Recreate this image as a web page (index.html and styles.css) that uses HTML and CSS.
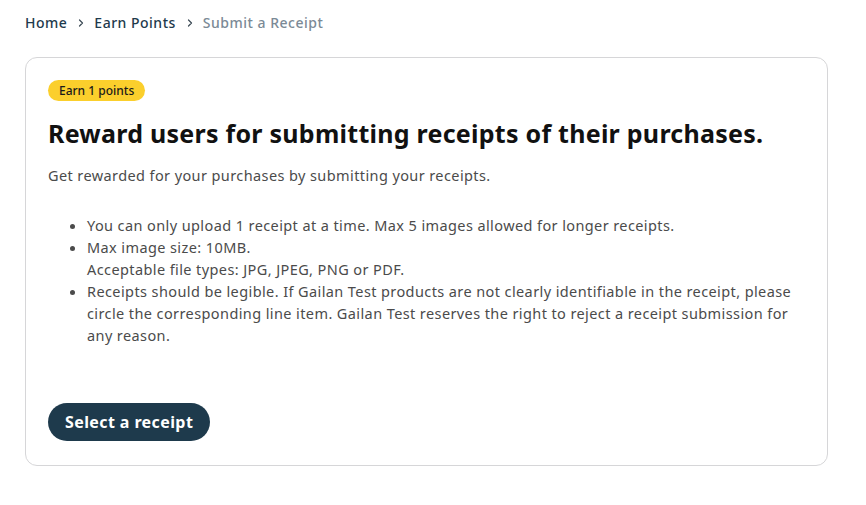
FILE: index.html
```html
<!DOCTYPE html>
<html>
<head>
<meta charset="utf-8">
<link rel="stylesheet" href="styles.css">
</head>
<body>
<div class="page">
  <nav class="crumbs">
    <a class="crumb">Home</a>
    <svg class="chev" viewBox="0 0 10 10" width="10" height="10"><path d="M3.5 2 L6.5 5 L3.5 8" fill="none" stroke="#3c4a55" stroke-width="1.2" stroke-linecap="round" stroke-linejoin="round"/></svg>
    <a class="crumb">Earn Points</a>
    <svg class="chev" viewBox="0 0 10 10" width="10" height="10"><path d="M3.5 2 L6.5 5 L3.5 8" fill="none" stroke="#3c4a55" stroke-width="1.2" stroke-linecap="round" stroke-linejoin="round"/></svg>
    <span class="crumb current">Submit a Receipt</span>
  </nav>
  <section class="card">
    <span class="badge">Earn 1 points</span>
    <h1 class="title">Reward users for submitting receipts of their purchases.</h1>
    <p class="lead">Get rewarded for your purchases by submitting your receipts.</p>
    <ul class="rules">
      <li>You can only upload 1 receipt at a time. Max 5 images allowed for longer receipts.</li>
      <li>Max image size: 10MB.<br>Acceptable file types: JPG, JPEG, PNG or PDF.</li>
      <li>Receipts should be legible. If Gailan Test products are not clearly identifiable in the receipt, please circle the corresponding line item. Gailan Test reserves the right to reject a receipt submission for any reason.</li>
    </ul>
    <button class="btn">Select a receipt</button>
  </section>
</div>
</body>
</html>
```
FILE: styles.css
```css
html, body { margin: 0; padding: 0; background: #fff; }
body { font-family: "Noto Sans", "Open Sans", sans-serif; color: #4b4b4b; }
.page { padding: 12px 38px 0 25px; }
.crumbs { display: flex; align-items: center; height: 21px; font-size: 14px; font-weight: 500; letter-spacing: 0.5px; }
.crumb { color: #1e3a4c; text-decoration: none; }
.crumb.current { color: #7b8a96; }
.chev { margin: 0 8px 0 9px; }
.card { margin-top: 24px; border: 1px solid #d6d6d8; border-radius: 12px; padding: 22px 22px 24px; width: 757px; display: flex; flex-direction: column; align-items: flex-start; }
.badge { display: block; background: #fbcf2c; color: #1a1a1a; font-size: 12px; font-weight: 500; line-height: 21px; padding: 0 11px; border-radius: 11px; }
.title { margin: 16px 0 0; font-size: 25px; font-weight: 700; letter-spacing: 0.26px; color: #111; line-height: 32px; }
.lead { margin: 15px 0 0; font-size: 14.5px; letter-spacing: 0.4px; line-height: 22px; }
.rules { margin: 28px 0 0; padding-left: 39px; font-size: 14.5px; letter-spacing: 0.4px; line-height: 22px; }
.btn { margin-top: 57px; background: #1e3a4c; color: #fff; border: none; border-radius: 19px; height: 38px; padding: 0 17px; font-family: inherit; font-size: 16px; font-weight: 700; letter-spacing: 0.4px; }
```
